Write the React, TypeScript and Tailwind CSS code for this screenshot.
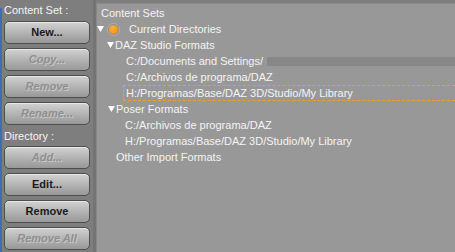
import React from "react";

function Btn({ label, disabled }: { label: string; disabled?: boolean }) {
  return (
    <div
      className={
        "h-[23px] w-[86px] shrink-0 rounded-[5px] border border-[#4e4e4e] bg-gradient-to-b from-[#d2d2d2] via-[#b4b4b4] to-[#989898] flex items-center justify-center text-[11px] font-bold shadow-[inset_0_1px_0_#e8e8e8] " +
        (disabled
          ? "text-[#8f8f8f] italic [text-shadow:1px_1px_0_#c8c8c8]"
          : "text-[#1a1a1a]")
      }
    >
      {label}
    </div>
  );
}

function Tri() {
  return (
    <svg width="7" height="6" viewBox="0 0 7 6" className="shrink-0">
      <polygon points="0,0 7,0 3.5,6" fill="#ffffff" />
    </svg>
  );
}

function Row({ children, pl, className = "" }: { children: React.ReactNode; pl: string; className?: string }) {
  return <div className={"h-[16px] flex items-center whitespace-nowrap " + pl + " " + className}>{children}</div>;
}

export default function App() {
  return (
    <div className="w-[455px] h-[252px] flex bg-[#7e7e7e] text-[11px] text-[#f4f4f4] font-['Liberation_Sans',Arial,sans-serif] overflow-hidden">
      <div className="w-[2px] mt-[8px] bg-[#3f6cb4]" />
      <div className="w-[91px] flex flex-col pl-[2px]">
        <div className="h-[21px] pt-[3px] leading-[14px]">Content Set :</div>
        <div className="flex flex-col gap-[4px]">
          <Btn label="New..." />
          <Btn label="Copy..." disabled />
          <Btn label="Remove" disabled />
          <Btn label="Rename..." disabled />
        </div>
        <div className="h-[21px] pt-[4px] leading-[14px]">Directory :</div>
        <div className="flex flex-col gap-[4px]">
          <Btn label="Add..." disabled />
          <Btn label="Edit..." />
          <Btn label="Remove" />
          <Btn label="Remove All" disabled />
        </div>
      </div>
      <div className="w-[3px] bg-[#747474]" />
      <div className="flex-1 mt-[3px] bg-[#989898] border-l border-t border-[#888888] pt-[1px] flex flex-col">
        <Row pl="pl-[4px]">Content Sets</Row>
        <Row pl="pl-[0px]">
          <Tri />
          <span className="ml-[3px] w-[13px] h-[13px] rounded-full bg-[#8e8e8e] border border-[#b0b0b0] flex items-center justify-center shrink-0">
            <span className="w-[9px] h-[9px] rounded-full bg-[radial-gradient(circle_at_40%_35%,#ffb030,#f08a10)]" />
          </span>
          <span className="ml-[9px]">Current Directories</span>
        </Row>
        <Row pl="pl-[10px]">
          <Tri />
          <span className="ml-[1px]">DAZ Studio Formats</span>
        </Row>
        <Row pl="pl-[29px]">
          <span>C:/Documents and Settings/</span>
          <span className="ml-[4px] flex-1 h-[9px] bg-[#888888]" />
        </Row>
        <Row pl="pl-[29px]">C:/Archivos de programa/DAZ</Row>
        <div className="ml-[26px] h-[16px] border-y border-l border-dashed border-[#f0a020] flex items-center pl-[2px] whitespace-nowrap">
          H:/Programas/Base/DAZ 3D/Studio/My Library
        </div>
        <Row pl="pl-[11px]">
          <Tri />
          <span className="ml-[1px]">Poser Formats</span>
        </Row>
        <Row pl="pl-[28px]">C:/Archivos de programa/DAZ</Row>
        <Row pl="pl-[28px]">H:/Programas/Base/DAZ 3D/Studio/My Library</Row>
        <Row pl="pl-[19px]">Other Import Formats</Row>
      </div>
    </div>
  );
}
